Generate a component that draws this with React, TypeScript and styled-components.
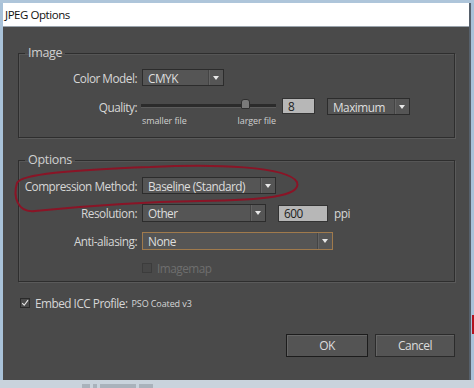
import React from "react";
import styled, { createGlobalStyle } from "styled-components";

const Global = createGlobalStyle`
  html, body { margin: 0; padding: 0; }
  body { width: 474px; height: 388px; overflow: hidden; font-family: "Open Sans", "Noto Sans", sans-serif; }
`;

const Screen = styled.div`
  width: 474px;
  height: 388px;
  display: flex;
  flex-direction: column;
  background: #b4c9dc;
`;

const TopEdge = styled.div`
  height: 3px;
  background: #aec5da;
`;

const Middle = styled.div`
  display: flex;
  height: 377px;
`;

const SideEdge = styled.div<{ $w: number }>`
  width: ${(p) => p.$w}px;
  background: #a9c2d9;
  display: flex;
  flex-direction: column;
`;

const RedMark = styled.div`
  margin-top: 312px;
  height: 19px;
  margin-left: 1px;
  background: #b3121e;
`;

const Window = styled.div`
  position: relative;
  flex: 1;
  display: flex;
  flex-direction: column;
  border-right: 2px solid #56606b;
`;

const TitleBar = styled.div`
  height: 23px;
  background: #ffffff;
  display: flex;
  align-items: center;
  padding-left: 2px;
  font-size: 11.5px;
  letter-spacing: -0.45px;
  color: #111;
  border-bottom: 1px solid #9aa4ad;
`;

const Body = styled.div`
  flex: 1;
  background: #4a4a4a;
  padding: 18px 14px 0 15px;
  display: flex;
  flex-direction: column;
  color: #d4d4d4;
  font-size: 11.8px;
  letter-spacing: -0.5px;
`;

const Group = styled.fieldset<{ $h: number; $mt: number }>`
  margin: ${(p) => p.$mt}px 0 0 0;
  padding: 0;
  height: ${(p) => p.$h}px;
  box-sizing: border-box;
  border: 1px solid #2e2e2e;
  box-shadow: 1px 1px 0 #5a5a5a, inset 1px 1px 0 #565656;
  display: flex;
  flex-direction: column;
  min-width: 0;
`;

const Legend = styled.legend`
  margin-left: 6px;
  padding: 0 3px;
  font-size: 12.5px;
  letter-spacing: -0.3px;
  line-height: 16px;
  color: #d0d0d0;
`;

const Row = styled.div<{ $mt: number }>`
  display: flex;
  align-items: center;
  margin-top: ${(p) => p.$mt}px;
`;

const Label = styled.div`
  width: 118px;
  text-align: right;
  padding-right: 5px;
  box-sizing: content-box;
  white-space: nowrap;
  color: #d6d6d6;
`;

const Select = styled.div<{ $w: number; $focus?: boolean }>`
  width: ${(p) => p.$w}px;
  height: 17px;
  box-sizing: border-box;
  border: 1px solid ${(p) => (p.$focus ? "#a07a4c" : "#2c2c2c")};
  background: #555555;
  display: flex;
  align-items: center;
  color: #dedede;
`;

const SelectText = styled.span`
  flex: 1;
  padding-left: 5px;
  white-space: nowrap;
`;

const Arrow = styled.span`
  width: 14px;
  height: 100%;
  border-left: 1px solid #444;
  box-shadow: inset 1px 0 0 #636363;
  display: flex;
  align-items: center;
  justify-content: center;
  &::after {
    content: "";
    border-left: 3px solid transparent;
    border-right: 3px solid transparent;
    border-top: 4px solid #e8e8e8;
  }
`;

const Input = styled.div<{ $w: number }>`
  width: ${(p) => p.$w}px;
  height: 16px;
  box-sizing: border-box;
  background: #b7b7b7;
  border: 1px solid #333;
  color: #1d1d1d;
  display: flex;
  align-items: center;
  padding-left: 5px;
`;

const SliderBox = styled.div`
  width: 134px;
  display: flex;
  flex-direction: column;
  margin-top: 6px;
`;

const Track = styled.div`
  position: relative;
  height: 3px;
  background: #2b2b2b;
  border-bottom: 1px solid #5c5c5c;
  margin-left: -1px;
`;

const Thumb = styled.div`
  position: absolute;
  left: 100px;
  top: -5px;
  width: 7px;
  height: 8px;
  background: #7a7a7a;
  border: 1px solid #2f2f2f;
  border-radius: 3px 3px 1px 1px;
`;

const SliderLabels = styled.div`
  display: flex;
  justify-content: space-between;
  font-size: 9px;
  color: #cfcfcf;
  margin-top: 6px;
  letter-spacing: -0.1px;
`;

const Gap = styled.div<{ $w: number }>`
  width: ${(p) => p.$w}px;
  flex: none;
`;

const Unit = styled.span`
  margin-left: 6px;
  color: #d6d6d6;
`;

const Check = styled.div<{ $disabled?: boolean }>`
  width: 10px;
  height: 10px;
  box-sizing: border-box;
  border: 1px solid ${(p) => (p.$disabled ? "#3c3c3c" : "#2a2a2a")};
  background: ${(p) => (p.$disabled ? "#474747" : "#4a4a4a")};
  display: flex;
  align-items: center;
  justify-content: center;
`;

const CheckLabel = styled.span<{ $disabled?: boolean }>`
  margin-left: 5px;
  color: ${(p) => (p.$disabled ? "#6e6e6e" : "#d6d6d6")};
`;

const Small = styled.span`
  font-size: 9px;
  letter-spacing: -0.1px;
  margin-left: 4px;
  color: #d6d6d6;
`;

const Buttons = styled.div`
  display: flex;
  justify-content: flex-end;
  gap: 7px;
  margin-top: 23px;
`;

const Button = styled.div<{ $w: number; $default?: boolean }>`
  width: ${(p) => p.$w}px;
  height: 23px;
  box-sizing: border-box;
  border: 1px solid ${(p) => (p.$default ? "#1c1c1c" : "#2b2b2b")};
  box-shadow: inset 1px 1px 0 #666;
  background: #545454;
  color: #dcdcdc;
  font-size: 12px;
  display: flex;
  align-items: center;
  justify-content: center;
`;

const BottomStrip = styled.div`
  height: 8px;
  background: #c9d3dc;
  display: flex;
  align-items: flex-end;
  gap: 3px;
  padding-left: 82px;
`;

const Blip = styled.div<{ $w: number }>`
  width: ${(p) => p.$w}px;
  height: 4px;
  background: #a9b2bb;
`;

const Annotation = styled.svg`
  position: absolute;
  left: -3px;
  top: -3px;
  pointer-events: none;
`;

export default function App() {
  return (
    <>
      <Global />
      <Screen>
        <TopEdge />
        <Middle>
          <SideEdge $w={3} />
          <Window>
            <TitleBar>JPEG Options</TitleBar>
            <Body>
              <Group $h={93} $mt={0}>
                <Legend>Image</Legend>
                <Row $mt={8}>
                  <Label>Color Model:</Label>
                  <Select $w={82}>
                    <SelectText>CMYK</SelectText>
                    <Arrow />
                  </Select>
                </Row>
                <Row $mt={12} style={{ alignItems: "flex-start" }}>
                  <Label style={{ marginTop: 1 }}>Quality:</Label>
                  <SliderBox>
                    <Track>
                      <Thumb />
                    </Track>
                    <SliderLabels>
                      <span>smaller file</span>
                      <span>larger file</span>
                    </SliderLabels>
                  </SliderBox>
                  <Gap $w={6} />
                  <Input $w={33}>8</Input>
                  <Gap $w={12} />
                  <Select $w={83}>
                    <SelectText>Maximum</SelectText>
                    <Arrow />
                  </Select>
                </Row>
              </Group>
              <Group $h={130} $mt={14}>
                <Legend>Options</Legend>
                <Row $mt={9}>
                  <Label>Compression Method:</Label>
                  <Select $w={134}>
                    <SelectText>Baseline (Standard)</SelectText>
                    <Arrow />
                  </Select>
                </Row>
                <Row $mt={10}>
                  <Label>Resolution:</Label>
                  <Select $w={124} style={{ height: 18 }}>
                    <SelectText>Other</SelectText>
                    <Arrow />
                  </Select>
                  <Gap $w={12} />
                  <Input $w={50} style={{ height: 17 }}>600</Input>
                  <Unit>ppi</Unit>
                </Row>
                <Row $mt={10}>
                  <Label>Anti-aliasing:</Label>
                  <Select $w={191} $focus style={{ height: 18 }}>
                    <SelectText>None</SelectText>
                    <Arrow />
                  </Select>
                </Row>
                <Row $mt={10}>
                  <Label />
                  <Check $disabled />
                  <CheckLabel $disabled>Imagemap</CheckLabel>
                </Row>
              </Group>
              <Row $mt={13} style={{ paddingLeft: 2 }}>
                <Check>
                  <svg width="10" height="10" viewBox="0 0 10 10">
                    <path d="M1.5 5.2 L4 7.8 L8.8 1.5" stroke="#e6e6e6" strokeWidth="1.4" fill="none" />
                  </svg>
                </Check>
                <CheckLabel>Embed ICC Profile:</CheckLabel>
                <Small>PSO Coated v3</Small>
              </Row>
              <Buttons>
                <Button $w={82} $default>OK</Button>
                <Button $w={80}>Cancel</Button>
              </Buttons>
            </Body>
            <Annotation width="320" height="230" viewBox="0 0 320 230">
              <path
                d="M150 167 C215 164 287 166 297 182 C302 197 262 200 200 201 C140 202 75 207 35 211 C17 213 13 196 17 183 C21 174 70 170 150 167"
                stroke="#8a1426"
                strokeWidth="2"
                fill="none"
              />
            </Annotation>
          </Window>
          <SideEdge $w={3}>
            <RedMark />
          </SideEdge>
        </Middle>
        <BottomStrip>
          <Blip $w={8} />
          <Blip $w={4} />
          <Blip $w={36} />
          <Blip $w={14} />
        </BottomStrip>
      </Screen>
    </>
  );
}
